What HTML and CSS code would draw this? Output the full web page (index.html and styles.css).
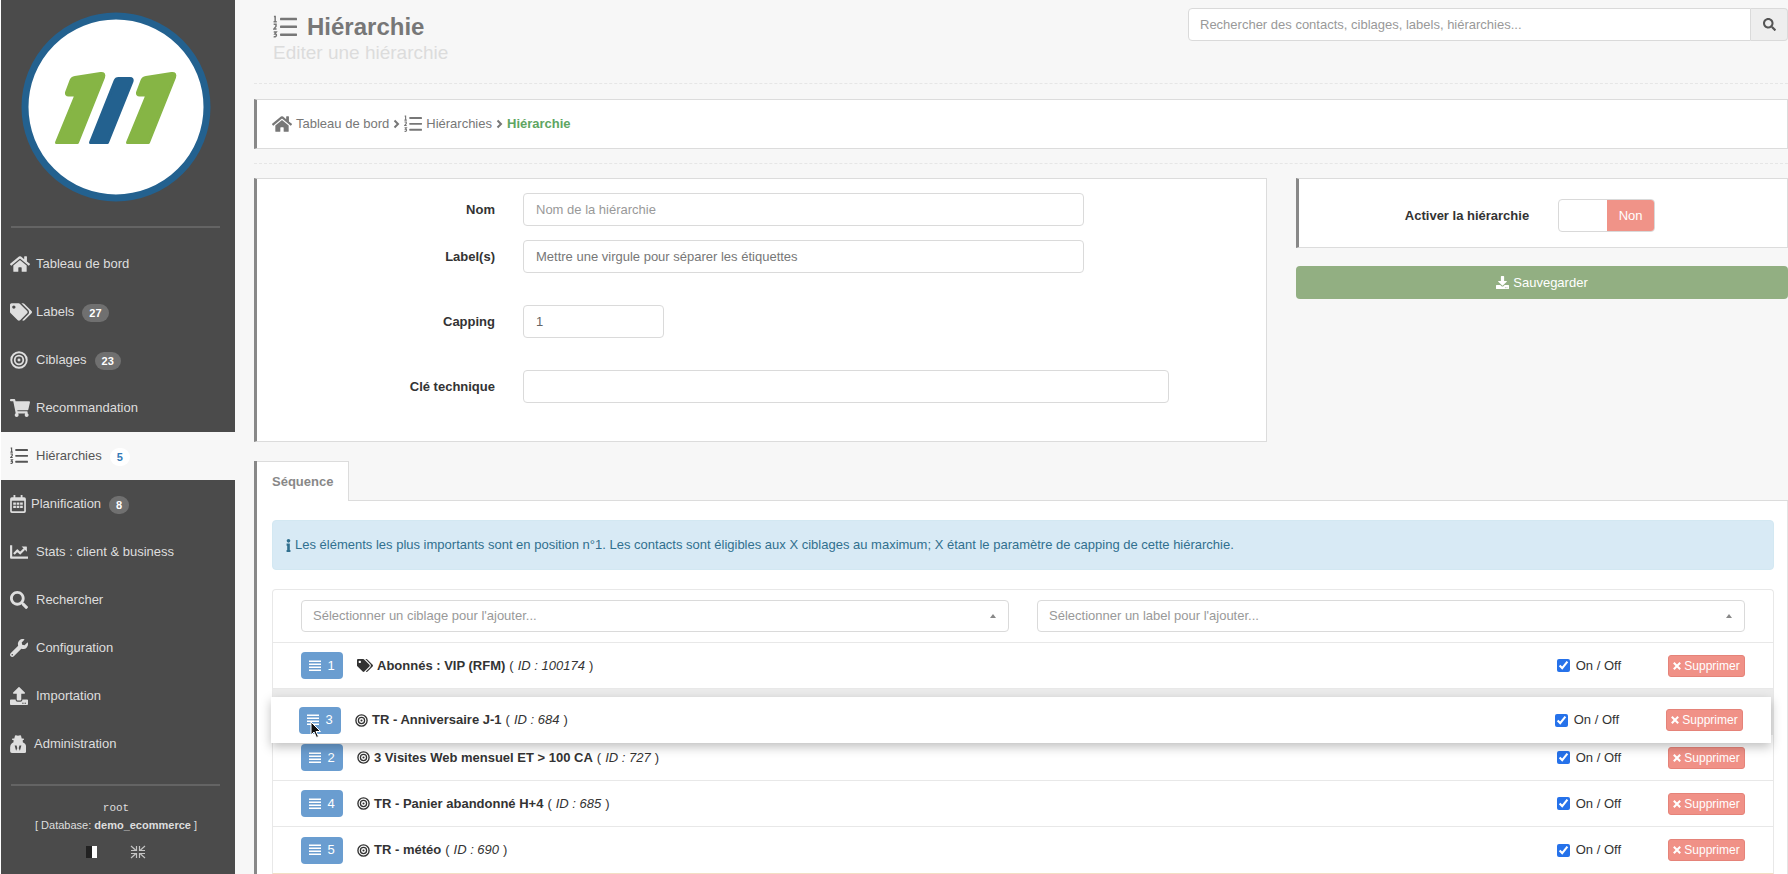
FILE: index.html
```html
<!DOCTYPE html>
<html lang="fr">
<head>
<meta charset="utf-8">
<title>Hiérarchie</title>
<link rel="stylesheet" href="styles.css">
</head>
<body>
<svg class="sprite" aria-hidden="true">
  <symbol id="home" viewBox="0 0 576 512"><path d="M280.37 148.26L96 300.11V464a16 16 0 0 0 16 16l112.06-.29a16 16 0 0 0 15.92-16V368a16 16 0 0 1 16-16h64a16 16 0 0 1 16 16v95.64a16 16 0 0 0 16 16.05L464 480a16 16 0 0 0 16-16V300L295.67 148.26a12.19 12.19 0 0 0-15.3 0zM571.6 251.47L488 182.56V44.05a12 12 0 0 0-12-12h-56a12 12 0 0 0-12 12v72.61L318.47 43a48 48 0 0 0-61 0L4.34 251.47a12 12 0 0 0-1.6 16.9l25.5 31A12 12 0 0 0 45.15 301l235.22-193.74a12.19 12.19 0 0 1 15.3 0L530.9 301a12 12 0 0 0 16.9-1.6l25.5-31a12 12 0 0 0-1.7-16.93z"/></symbol>
  <symbol id="tags" viewBox="0 0 640 512"><path d="M497.941 225.941L286.059 14.059A48 48 0 0 0 252.118 0H48C21.49 0 0 21.49 0 48v204.118a48 48 0 0 0 14.059 33.941l211.882 211.882c18.744 18.745 49.136 18.746 67.882 0l204.118-204.118c18.745-18.745 18.745-49.137 0-67.882zM112 160c-26.51 0-48-21.49-48-48s21.49-48 48-48 48 21.49 48 48-21.49 48-48 48zm513.941 133.823L421.823 497.941c-18.745 18.745-49.137 18.745-67.882 0l-.36-.36L527.64 323.522c16.999-16.999 26.36-39.6 26.36-63.64s-9.362-46.641-26.36-63.64L331.397 0h48.721a48 48 0 0 1 33.941 14.059l211.882 211.882c18.745 18.745 18.745 49.137 0 67.882z"/></symbol>
  <symbol id="target" viewBox="0 0 512 512"><g fill="none" stroke="currentColor"><circle cx="256" cy="256" r="220" stroke-width="54"/><circle cx="256" cy="256" r="122" stroke-width="50"/></g><circle cx="256" cy="256" r="42"/></symbol>
  <symbol id="cart" viewBox="0 0 576 512"><path d="M528.12 301.319l47.273-208C578.806 78.301 567.391 64 551.99 64H159.208l-9.166-44.81C147.758 8.021 137.93 0 126.529 0H24C10.745 0 0 10.745 0 24v16c0 13.255 10.745 24 24 24h69.883l70.248 343.435C147.325 417.1 136 435.222 136 456c0 30.928 25.072 56 56 56s56-25.072 56-56c0-15.674-6.447-29.835-16.824-40h209.647C430.447 426.165 424 440.326 424 456c0 30.928 25.072 56 56 56s56-25.072 56-56c0-22.172-12.888-41.332-31.579-50.405l5.517-24.276c3.413-15.018-8.002-29.319-23.403-29.319H218.117l-6.545-32h293.145c11.206 0 20.92-7.754 23.403-18.681z"/></symbol>
  <symbol id="list" viewBox="0 0 512 512"><rect x="150" y="58" width="362" height="54" rx="12"/><rect x="150" y="224" width="362" height="54" rx="12"/><rect x="150" y="392" width="362" height="54" rx="12"/><path fill="none" stroke="currentColor" stroke-width="32" d="M20 32h26v108M12 146h68M14 198h50v44l-46 58h58M16 362h54l-30 42q36 0 32 34t-58 24"/></symbol>
  <symbol id="calendar" viewBox="0 0 448 512"><path fill-rule="evenodd" d="M48 64h352a48 48 0 0 1 48 48v352a48 48 0 0 1-48 48H48a48 48 0 0 1-48-48V112a48 48 0 0 1 48-48zm0 96v290q0 14 14 14h324q14 0 14-14V160z"/><rect x="96" y="0" width="52" height="110" rx="14"/><rect x="300" y="0" width="52" height="110" rx="14"/><path d="M88 212h76v64H88zm98 0h76v64h-76zm98 0h76v64h-76zM88 304h76v64H88zm98 0h76v64h-76zm98 0h76v64h-76z"/></symbol>
  <symbol id="chart" viewBox="0 0 512 512"><path fill="none" stroke="currentColor" stroke-width="62" stroke-linejoin="round" d="M32 64v352h480M112 310l96-100 80 84 120-126"/><path d="M330 96h134a16 16 0 0 1 16 16v134z"/></symbol>
  <symbol id="search" viewBox="0 0 512 512"><path d="M505 442.7L405.3 343c-4.5-4.5-10.6-7-17-7H372c27.6-35.3 44-79.7 44-128C416 93.1 322.9 0 208 0S0 93.1 0 208s93.1 208 208 208c48.3 0 92.7-16.4 128-44v16.3c0 6.4 2.5 12.5 7 17l99.7 99.7c9.4 9.4 24.6 9.4 33.9 0l28.3-28.3c9.4-9.4 9.4-24.6.1-34zM208 336c-70.7 0-128-57.2-128-128 0-70.7 57.2-128 128-128 70.7 0 128 57.2 128 128 0 70.7-57.2 128-128 128z"/></symbol>
  <symbol id="wrench" viewBox="0 0 512 512"><path d="M507.73 109.1c-2.24-9.03-13.54-12.09-20.12-5.51l-74.36 74.36-67.88-11.31-11.31-67.88 74.36-74.36c6.62-6.62 3.43-17.9-5.66-20.16-47.38-11.74-99.55.91-136.58 37.93-39.64 39.64-50.55 97.1-34.05 147.2L18.74 402.76c-24.99 24.99-24.99 65.51 0 90.5 24.99 24.99 65.51 24.99 90.5 0l213.21-213.21c50.12 16.71 107.47 5.68 147.37-34.22 37.07-37.07 49.7-89.32 37.91-136.73zM64 472c-13.25 0-24-10.75-24-24 0-13.26 10.75-24 24-24s24 10.74 24 24c0 13.25-10.75 24-24 24z"/></symbol>
  <symbol id="upload" viewBox="0 0 512 512"><path d="M296 384h-80c-13.3 0-24-10.7-24-24V192h-87.7c-17.8 0-26.7-21.5-14.1-34.1L242.3 5.7c7.5-7.5 19.8-7.5 27.3 0l152.2 152.2c12.6 12.6 3.7 34.1-14.1 34.1H320v168c0 13.3-10.7 24-24 24zm216-8v112c0 13.3-10.7 24-24 24H24c-13.3 0-24-10.7-24-24V376c0-13.3 10.7-24 24-24h136v8c0 30.9 25.1 56 56 56h80c30.9 0 56-25.1 56-56v-8h136c13.3 0 24 10.7 24 24zm-124 88c0-11-9-20-20-20s-20 9-20 20 9 20 20 20 20-9 20-20zm64 0c0-11-9-20-20-20s-20 9-20 20 9 20 20 20 20-9 20-20z"/></symbol>
  <symbol id="download" viewBox="0 0 512 512"><path d="M216 0h80c13.3 0 24 10.7 24 24v168h87.7c17.8 0 26.7 21.5 14.1 34.1L269.7 378.3c-7.5 7.5-19.8 7.5-27.3 0L90.1 226.1c-12.6-12.6-3.7-34.1 14.1-34.1H192V24c0-13.3 10.7-24 24-24zm296 376v112c0 13.3-10.7 24-24 24H24c-13.3 0-24-10.7-24-24V376c0-13.3 10.7-24 24-24h146.7l49 49c20.1 20.1 52.5 20.1 72.6 0l49-49H488c13.3 0 24 10.7 24 24zm-124 88c0-11-9-20-20-20s-20 9-20 20 9 20 20 20 20-9 20-20zm64 0c0-11-9-20-20-20s-20 9-20 20 9 20 20 20 20-9 20-20z"/></symbol>
  <symbol id="agent" viewBox="0 0 448 512"><path fill-rule="evenodd" d="M118 96L138 20Q146 0 166 6l58 18 58-18q20-6 28 14l20 76h46q16 0 16 16v16q0 16-16 16h-16v60l46 34q50 40 50 110v116q0 48-48 48H48q-48 0-48-48V348q0-70 50-110l46-34v-60H72q-16 0-16-16v-16q0-16 16-16zM128 300l42 150 34-76-20-74zm192 0l-42 150-34-76 20-74z"/></symbol>
  <symbol id="compress" viewBox="0 0 16 14"><path fill="none" stroke="currentColor" stroke-width="1.2" d="M1 1l4.500 4M1 5.500h5.500V1M15 1l-4.500 4M15 5.500H9.500V1M1 13l4.500-4M1 8.500h5.500V13M15 13l-4.500-4M15 8.500H9.500V13"/></symbol>
  <symbol id="info" viewBox="0 0 192 512"><circle cx="96" cy="72" r="72"/><path d="M20 180h128v250h24v82H20v-82h24V262H20z"/></symbol>
  <symbol id="chevron" viewBox="0 0 8 12"><path fill="none" stroke="currentColor" stroke-width="2" d="M1.500 2.500l3.500 3.500-3.500 3.500"/></symbol>
  <symbol id="bars" viewBox="0 0 24 24"><path d="M0 1h24v3H0zM0 7h24v3H0zM0 13h24v3H0zM0 19h24v3H0z"/></symbol>
  <symbol id="cross" viewBox="0 0 10 10"><path fill="none" stroke="currentColor" stroke-width="2.600" d="M1 1l8 8M9 1l-8 8"/></symbol>
</svg>
<div class="app">
  <aside class="sidebar">
    <svg class="logo" viewBox="0 0 190 190" role="img" aria-label="1/1">
      <circle cx="95" cy="95" r="91" fill="#fff" stroke="#23618f" stroke-width="7"/>
      <g stroke-width="3" stroke-linejoin="round">
        <path id="one" fill="#86b545" stroke="#86b545" d="M35.500 130.500H56.500L82.500 65.500Q84 61 79.500 61.500L54 65.500Q51 66 50 68.500L45.500 80.500Q45 83 47.500 83H55Z"/>
        <path fill="#23618f" stroke="#23618f" d="M69.500 130.500H86.500L111 69.500Q112 66.500 109 66.500H97.500Q95 66.500 94 69Z"/>
        <use href="#one" x="71"/>
      </g>
    </svg>
    <hr class="rule">
    <nav>
      <ul class="menu">
        <li><a href="#"><span class="slot"><svg class="w20"><use href="#home"/></svg></span>Tableau de bord</a></li>
        <li><a href="#"><span class="slot"><svg class="w22"><use href="#tags"/></svg></span>Labels <span class="badge">27</span></a></li>
        <li><a href="#"><span class="slot"><svg class="w18"><use href="#target"/></svg></span>Ciblages <span class="badge">23</span></a></li>
        <li><a href="#"><span class="slot"><svg class="w20"><use href="#cart"/></svg></span>Recommandation</a></li>
        <li><a href="#" class="active" aria-current="page"><span class="slot"><svg class="w18"><use href="#list"/></svg></span>Hiérarchies <span class="badge">5</span></a></li>
        <li><a href="#"><span class="slot slot-s"><svg class="w16"><use href="#calendar"/></svg></span>Planification <span class="badge">8</span></a></li>
        <li><a href="#"><span class="slot"><svg class="w18"><use href="#chart"/></svg></span>Stats : client &amp; business</a></li>
        <li><a href="#"><span class="slot"><svg class="w18"><use href="#search"/></svg></span>Rechercher</a></li>
        <li><a href="#"><span class="slot"><svg class="w18"><use href="#wrench"/></svg></span>Configuration</a></li>
        <li><a href="#"><span class="slot"><svg class="w18"><use href="#upload"/></svg></span>Importation</a></li>
        <li><a href="#"><span class="slot slot-m"><svg class="w16"><use href="#agent"/></svg></span>Administration</a></li>
      </ul>
    </nav>
    <hr class="rule">
    <div class="account">
      <span class="user">root</span>
      <span>[ Database: <b>demo_ecommerce</b> ]</span>
      <div class="tools">
        <button type="button" class="flag" aria-label="Langue"></button>
        <button type="button" aria-label="Réduire"><svg><use href="#compress"/></svg></button>
      </div>
    </div>
  </aside>
  <main class="main">
    <header class="top">
      <div>
        <h1><svg><use href="#list"/></svg>Hiérarchie</h1>
        <p class="subtitle">Editer une hiérarchie</p>
      </div>
      <form class="search" role="search">
        <input type="text" class="field" aria-label="Rechercher" placeholder="Rechercher des contacts, ciblages, labels, hiérarchies...">
        <button type="button" aria-label="Lancer la recherche"><svg><use href="#search"/></svg></button>
      </form>
    </header>
    <nav class="crumbs panel" aria-label="Fil d'Ariane">
      <a href="#"><svg class="w20"><use href="#home"/></svg>Tableau de bord</a>
      <svg class="chev"><use href="#chevron"/></svg>
      <a href="#"><svg class="w18"><use href="#list"/></svg>Hiérarchies</a>
      <svg class="chev"><use href="#chevron"/></svg>
      <b>Hiérarchie</b>
    </nav>
    <div class="columns">
      <form class="panel form">
        <label for="nom">Nom</label>
        <input id="nom" class="field medium" type="text" placeholder="Nom de la hiérarchie">
        <label for="labels">Label(s)</label>
        <input id="labels" class="field medium dark" type="text" placeholder="Mettre une virgule pour séparer les étiquettes">
        <label for="capping" class="spaced">Capping</label>
        <input id="capping" class="field small spaced" type="text" value="1">
        <label for="cle" class="spaced">Clé technique</label>
        <input id="cle" class="field large spaced" type="text">
      </form>
      <div>
        <div class="panel activate">
          <label for="actif">Activer la hiérarchie</label>
          <label class="switch"><input id="actif" type="checkbox"><span>Non</span></label>
        </div>
        <button type="button" class="save"><svg><use href="#download"/></svg>Sauvegarder</button>
      </div>
    </div>
    <section class="sequence">
      <div class="tabs"><button type="button" class="tab">Séquence</button></div>
      <div class="pane">
        <p class="info"><svg><use href="#info"/></svg>Les éléments les plus importants sont en position n°1. Les contacts sont éligibles aux X ciblages au maximum; X étant le paramètre de capping de cette hiérarchie.</p>
        <ul class="list">
          <li class="pickers">
            <div class="picker"><select aria-label="Ciblage"><option>Sélectionner un ciblage pour l'ajouter...</option></select></div>
            <div class="picker"><select aria-label="Label"><option>Sélectionner un label pour l'ajouter...</option></select></div>
          </li>
          <li class="row">
            <button type="button" class="handle"><svg><use href="#bars"/></svg>1</button>
            <span class="name"><svg class="w16"><use href="#tags"/></svg><b>Abonnés : VIP (RFM)</b> ( <i>ID : 100174</i> )</span>
            <label class="onoff"><input type="checkbox" checked>On / Off</label>
            <button type="button" class="remove"><svg><use href="#cross"/></svg>Supprimer</button>
          </li>
          <li class="drop">
            <div class="row dragged">
              <button type="button" class="handle"><svg><use href="#bars"/></svg>3</button>
              <span class="name"><svg class="w12"><use href="#target"/></svg><b>TR - Anniversaire J-1</b> ( <i>ID : 684</i> )</span>
              <label class="onoff"><input type="checkbox" checked>On / Off</label>
              <button type="button" class="remove"><svg><use href="#cross"/></svg>Supprimer</button>
              <svg class="pointer" viewBox="0 0 12 18"><path fill="#111" stroke="#fff" d="M1 1v13l3-3 2.500 5.500 2-1L6 10.500h4.500z"/></svg>
            </div>
          </li>
          <li class="row">
            <button type="button" class="handle"><svg><use href="#bars"/></svg>2</button>
            <span class="name"><svg class="w12"><use href="#target"/></svg><b>3 Visites Web mensuel ET &gt; 100 CA</b> ( <i>ID : 727</i> )</span>
            <label class="onoff"><input type="checkbox" checked>On / Off</label>
            <button type="button" class="remove"><svg><use href="#cross"/></svg>Supprimer</button>
          </li>
          <li class="row">
            <button type="button" class="handle"><svg><use href="#bars"/></svg>4</button>
            <span class="name"><svg class="w12"><use href="#target"/></svg><b>TR - Panier abandonné H+4</b> ( <i>ID : 685</i> )</span>
            <label class="onoff"><input type="checkbox" checked>On / Off</label>
            <button type="button" class="remove"><svg><use href="#cross"/></svg>Supprimer</button>
          </li>
          <li class="row">
            <button type="button" class="handle"><svg><use href="#bars"/></svg>5</button>
            <span class="name"><svg class="w12"><use href="#target"/></svg><b>TR - météo</b> ( <i>ID : 690</i> )</span>
            <label class="onoff"><input type="checkbox" checked>On / Off</label>
            <button type="button" class="remove"><svg><use href="#cross"/></svg>Supprimer</button>
          </li>
        </ul>
      </div>
    </section>
  </main>
</div>
</body>
</html>
```

FILE: styles.css
```css
* { box-sizing: border-box; }

body {
  margin: 0;
  background: #f7f7f7;
  color: #333;
  font: 13px/20px "Liberation Sans", Arial, sans-serif;
}

button, input, select { font: inherit; color: inherit; margin: 0; }
button { border: 0; padding: 0; background: none; cursor: pointer; }
a { color: inherit; text-decoration: none; }
ul { list-style: none; margin: 0; padding: 0; }
svg { fill: currentColor; flex: none; display: block; }
.sprite { display: none; }
.w12 { width: 13px; height: 13px; }
.w16 { width: 16px; height: 18px; }
.w18 { width: 18px; height: 18px; }
.w20 { width: 20px; height: 18px; }
.w22 { width: 22px; height: 18px; }

.app { display: flex; min-height: 100vh; padding-left: 1px; background: #fff; }

/* Sidebar */
.sidebar {
  width: 234px;
  flex: none;
  padding-top: 12px;
  background: #4b4b4b;
  color: #dedede;
}
.logo { width: 190px; height: 190px; margin: 0 auto 0 20px; }
.rule { height: 2px; margin: 0 15px 0 10px; border: 0; background: #646464; }
.logo + .rule { margin-top: 24px; margin-bottom: 12px; }
.menu a { display: flex; align-items: center; height: 48px; padding-left: 9px; }
.slot { width: 26px; flex: none; }
.slot-s { width: 21px; }
.slot-m { width: 24px; }
.menu .active { background: #f7f7f7; color: #555; }
.badge {
  margin: 2px 0 0 8px;
  padding: 0 7px;
  border-radius: 9px;
  background: #707070;
  color: #fff;
  font-size: 11px;
  font-weight: bold;
  line-height: 18px;
}
.active .badge { background: #fff; color: #337ab7; }
nav + .rule { margin-top: 16px; }
.account {
  display: flex;
  flex-direction: column;
  align-items: center;
  padding-top: 14px;
  font-size: 11px;
  line-height: 17px;
  padding-right: 4px;
}
.user { font-family: "Liberation Mono", "Courier New", monospace; }
.tools { display: flex; align-items: center; gap: 33px; padding: 11px 0 0; }
.tools svg { width: 16px; height: 14px; color: #c4c4c4; }
.flag { width: 11px; height: 12px; border-left: 6px solid #222; background: #fff; }

/* Main column */
.main { flex: 1; min-width: 0; padding-left: 19px; background: #f7f7f7; }
.top {
  display: flex;
  justify-content: space-between;
  align-items: flex-start;
  height: 84px;
  padding: 8px 0 0 19px;
  border-bottom: 1px dashed #e6e6e6;
}
h1 {
  display: flex;
  align-items: center;
  gap: 10px;
  margin: 5px 0 0;
  color: #777;
  font-size: 24px;
  line-height: 28px;
}
h1 svg { width: 24px; height: 24px; }
.subtitle { margin: 0; color: #dcdcdc; font-size: 19px; line-height: 24px; }
.field {
  height: 33px;
  padding: 0 12px;
  border: 1px solid #dadada;
  border-radius: 4px;
  background: #fff;
  color: #666;
}
.field::placeholder { color: #999; opacity: 1; }
.dark::placeholder { color: #777; }
.search { display: flex; width: 600px; }
.search .field { flex: 1; min-width: 0; padding: 0 11px; border-radius: 4px 0 0 4px; }
.search button {
  display: grid;
  place-items: center;
  width: 37px;
  border: 1px solid #dadada;
  border-left: 0;
  border-radius: 0 4px 4px 0;
  background: #eee;
  color: #555;
}
.search svg { width: 13px; height: 13px; }

.panel { border: 1px solid #dcdcdc; border-left: 3px solid #888; background: #fff; }
.crumbs {
  display: flex;
  align-items: center;
  height: 50px;
  margin: 15px 0 14px;
  padding-left: 15px;
  color: #777;
}
.crumbs a { display: flex; align-items: center; gap: 4px; }
.crumbs b { color: #5ea562; }
.chev { width: 8px; height: 12px; margin: 0 3px 0 4px; }

.columns {
  display: grid;
  grid-template-columns: 1013fr 492fr;
  gap: 29px;
  padding-top: 14px;
  border-top: 1px dashed #e6e6e6;
}
.form {
  display: grid;
  grid-template-columns: 238fr 743fr;
  gap: 14px 28px;
  align-items: center;
  padding: 14px 0 38px;
}
.form label { text-align: right; font-weight: bold; }
.medium { width: 75.5%; }
.small { width: 19%; }
.large { width: 87%; }
.spaced { margin-top: 18px; }

.activate {
  display: flex;
  align-items: center;
  justify-content: center;
  gap: 29px;
  height: 70px;
  margin-bottom: 18px;
  padding: 5px 26px 0 0;
  font-weight: bold;
}
.switch {
  position: relative;
  display: flex;
  width: 97px;
  height: 33px;
  padding-left: 48px;
  border: 1px solid #d9d9d9;
  border-radius: 4px;
  overflow: hidden;
  font-weight: normal;
}
.switch input { position: absolute; inset: 0; opacity: 0; }
.switch span { flex: 1; background: #f09388; color: #fff; text-align: center; line-height: 31px; }
.save {
  display: flex;
  align-items: center;
  justify-content: center;
  gap: 4px;
  width: 100%;
  height: 33px;
  border-radius: 4px;
  background: #92af82;
  color: #fff;
}
.save svg { width: 13px; height: 13px; }

/* Sequence */
.sequence { margin-top: 19px; border-left: 3px solid #888; }
.tabs { border-bottom: 1px solid #dcdcdc; display: flex; }
.tab {
  height: 40px;
  margin-bottom: -1px;
  padding: 0 15px;
  border: 1px solid #dcdcdc;
  border-width: 1px 1px 0 0;
  background: #fff;
  color: #888;
  font-weight: bold;
}
.pane { padding: 19px 13px 0 15px; border-right: 1px solid #e4e4e4; background: #fff; }
.info {
  display: flex;
  align-items: center;
  gap: 4px;
  height: 50px;
  margin: 0 0 19px;
  padding-left: 13px;
  border: 1px solid #d3e8f2;
  border-radius: 4px;
  background: #d8eaf5;
  color: #31708f;
}
.info svg { width: 5px; height: 13px; }
.list { border: 1px solid #e8e8e8; border-radius: 4px 4px 0 0; border-bottom-color: #f3dfc4; }
.pickers {
  display: grid;
  grid-template-columns: 1fr 1fr;
  gap: 28px;
  padding: 10px 28px;
  border-bottom: 1px solid #e8e8e8;
}
.picker { position: relative; }
.picker select {
  appearance: none;
  display: block;
  width: 100%;
  height: 32px;
  padding: 0 11px;
  border: 1px solid #dadada;
  border-radius: 4px;
  background: #fff;
  color: #999;
}
.picker::after {
  content: "";
  position: absolute;
  top: 14px;
  right: 13px;
  border: 3px solid transparent;
  border-top: 0;
  border-bottom: 4px solid #888;
}
.row {
  display: flex;
  align-items: center;
  height: 46px;
  padding: 0 28px;
  border-bottom: 1px solid #e8e8e8;
}
.row:last-child { border-bottom: 0; }
.handle {
  display: flex;
  align-items: center;
  justify-content: center;
  gap: 6px;
  width: 42px;
  height: 27px;
  margin-right: 14px;
  border-radius: 4px;
  background: #6a9dd0;
  color: #fff;
}
.handle svg { width: 12px; height: 12px; }
.name { display: flex; align-items: center; flex: 1; gap: 4px; }
.name .w16 { height: 13px; }
.onoff { display: flex; align-items: center; gap: 6px; margin-right: 47px; }
.onoff input { width: 13px; height: 13px; accent-color: #2672ea; }
.remove {
  display: flex;
  align-items: center;
  justify-content: center;
  gap: 3px;
  width: 77px;
  height: 22px;
  border: 1px solid #e58379;
  border-radius: 3px;
  background: #f09187;
  color: #fff;
  font-size: 12px;
}
.remove svg { width: 8px; height: 8px; }
.drop { position: relative; height: 46px; background: #ebebeb; }
.dragged {
  position: absolute;
  z-index: 1;
  top: 8px;
  left: -2px;
  width: 100%;
  border: 0;
  background: #fff;
  box-shadow: 0 4px 10px rgba(0, 0, 0, .25);
}
.pointer { position: absolute; left: 39px; top: 24px; width: 12px; height: 18px; }
```
